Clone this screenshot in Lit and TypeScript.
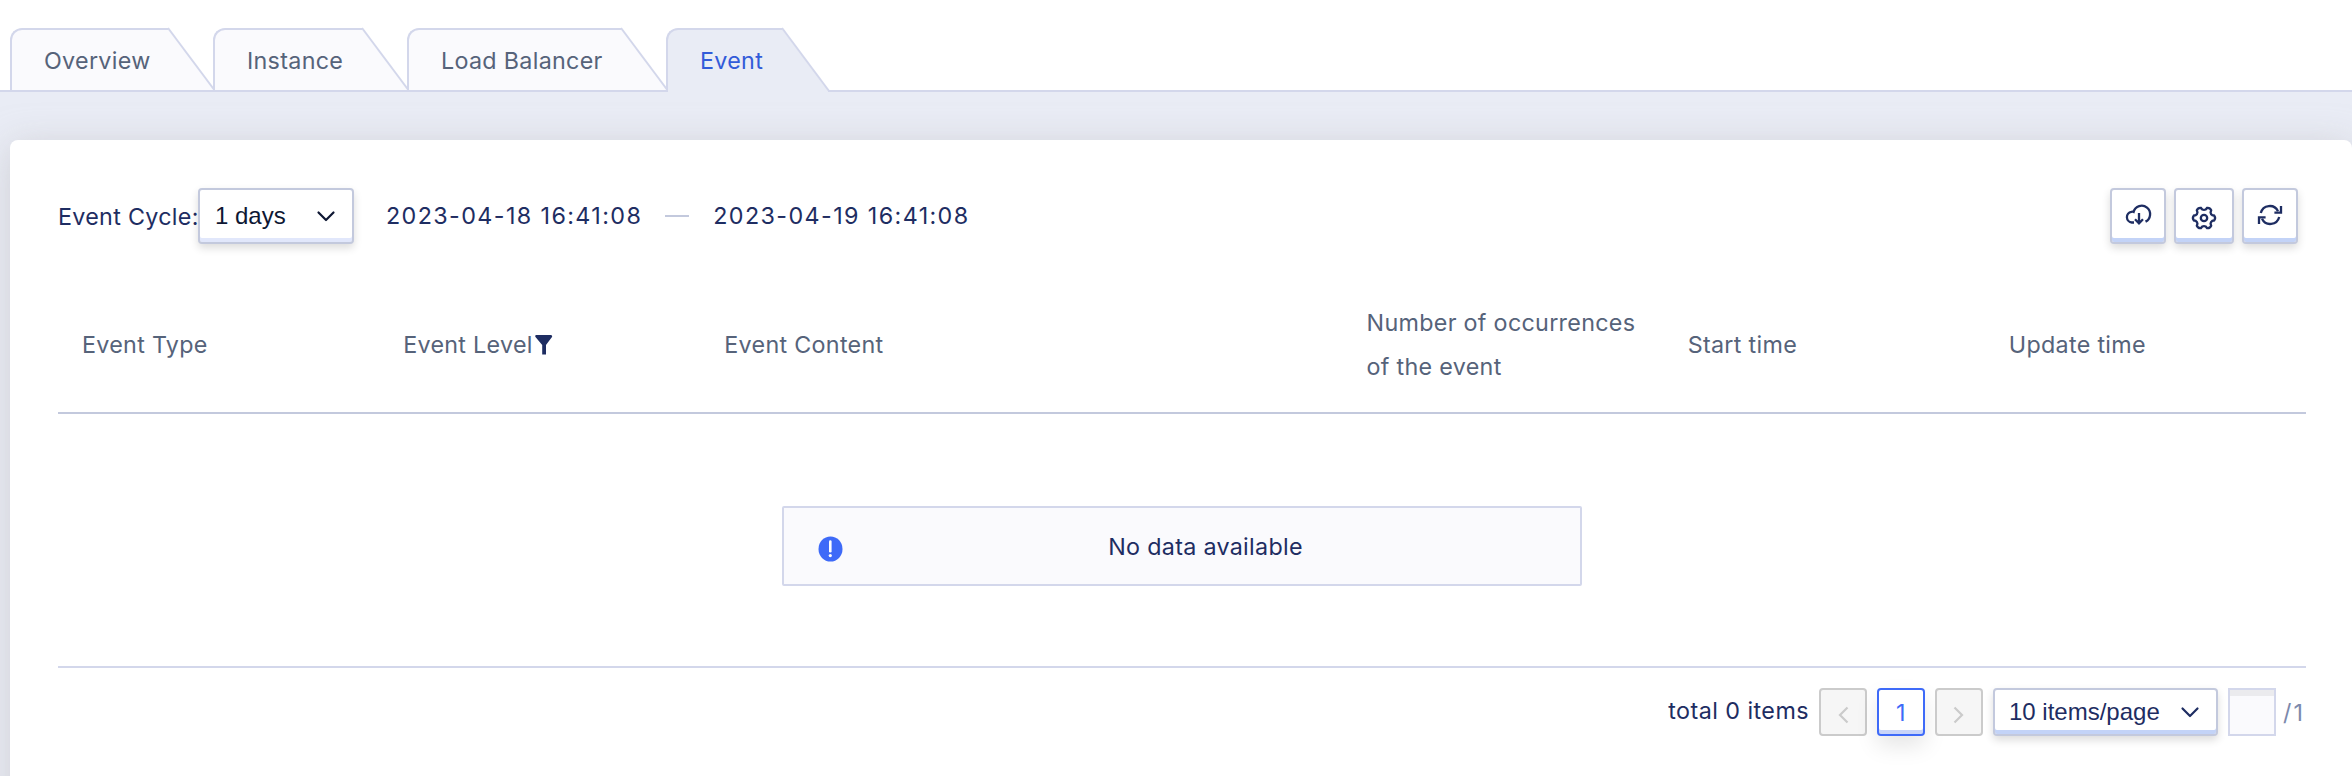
import { LitElement, html, css, svg } from "lit";
import { customElement } from "lit/decorators.js";
import { classMap } from "lit/directives/class-map.js";
import { styleMap } from "lit/directives/style-map.js";

const tabs = [
  { label: "Overview", width: 158 },
  { label: "Instance", width: 149 },
  { label: "Load Balancer", width: 214 },
  { label: "Event", width: 116, active: true },
];

const chevron = html`<svg class="chevron" width="20" height="14" viewBox="0 0 20 14">
  <path d="M2.5 3.5 L10 11 L17.5 3.5" fill="none" stroke="currentColor" stroke-width="2.2" stroke-linecap="round" stroke-linejoin="round" />
</svg>`;

/* Six-lobed gear outline, sampled around its centre. */
const gearPath = (() => {
  const pts: string[] = [];
  for (let i = 0; i < 6; i++) {
    const at = (deg: number, r: number) => {
      const a = ((i * 60 + deg) * Math.PI) / 180;
      return `${(12 + r * Math.cos(a)).toFixed(2)} ${(12 + r * Math.sin(a)).toFixed(2)}`;
    };
    pts.push(`${i ? "L" : "M"}${at(-13, 10.5)}`, `Q${at(0, 12)} ${at(13, 10.5)}`, `L${at(19, 8.7)}`, `Q${at(30, 7.8)} ${at(41, 8.7)}`);
  }
  return pts.join(" ") + "Z";
})();

@customElement("app-root")
export class AppRoot extends LitElement {
  static styles = css`
    :host {
      display: flex;
      flex-direction: column;
      height: 776px;
      overflow: hidden;
      background: #fff;
      font-family: Inter, "Liberation Sans", sans-serif;
      font-size: 23.3px;
      letter-spacing: 0.3px;
      color: #1e2d62;
      box-sizing: border-box;
    }
    *, *::before { box-sizing: border-box; }
    svg { display: block; flex: none; }
    .tabs { display: flex; height: 92px; padding: 28px 0 0 10px; flex: none;
      background: linear-gradient(#d3d7eb, #d3d7eb) 0 90px / 100% 2px no-repeat; }
    .tab { display: flex; height: 62px; margin-right: -1px; color: #56637a; }
    .tab-body { height: 62px; padding-left: 32px; line-height: 62px; white-space: nowrap;
      background: #fafafd; border: 2px solid #d3d7eb; border-right: 0; border-bottom: 0; border-radius: 12px 0 0 0; }
    .slant { overflow: visible; }
    .slant .fill { fill: #fafafd; }
    .slant .edge { stroke: #d3d7eb; stroke-width: 2; fill: none; }
    .active { color: #325bd9; }
    .active .tab-body { height: 64px; background: #e9ecf5; }
    .active .slant .fill { fill: #e9ecf5; }
    .content { flex: 1; background: #e9ecf5; padding: 48px 0 0 10px; overflow: hidden; }
    .card { height: 720px; background: #fff; border-radius: 8px; padding: 48px 46px 0 48px;
      box-shadow: 0 6px 36px rgba(190, 188, 192, 0.6); }
    .toolbar { display: flex; align-items: center; height: 56px; }
    .cycle-label { width: 140px; white-space: nowrap; padding-top: 1px; }
    .select { display: flex; align-items: center; justify-content: space-between; flex: none;
      font-family: "Liberation Sans", Arial, sans-serif; font-size: 24px; letter-spacing: 0;
      border: 2px solid #c3c9dd; border-radius: 4px; background: #fff;
      box-shadow: inset 0 -4px 0 #e1e7fb, 0 4px 8px rgba(0, 0, 0, 0.14); }
    .cycle { width: 156px; height: 56px; padding: 0 16px 0 15px; color: #0e1733; }
    .dates { display: flex; align-items: center; margin-left: 32px; letter-spacing: 1.4px; white-space: nowrap; }
    .dates span { padding-bottom: 1px; }
    .dash { width: 24px; height: 2px; margin: 0 24px 0 23px; background: #c3c9dd; }
    .actions { display: flex; gap: 8px; margin: 0 8px 0 auto; }
    .action { display: flex; align-items: center; justify-content: center; width: 56px; height: 56px; padding: 0 1px 2px 0;
      border: 2px solid #c3c9dd; border-radius: 4px; background: #fff;
      box-shadow: inset 0 -4px 0 #c3d3f7, 0 4px 8px rgba(0, 0, 0, 0.14); }
    .wide { width: 60px; padding: 4px 0 0; }
    .icon { fill: none; stroke: #1e2d62; stroke-width: 2.3; overflow: visible; }
    .head { display: grid; grid-template-columns: 1fr 1fr 2fr 1fr 1fr 1fr; align-items: center;
      height: 138px; margin-top: 32px; padding-top: 1px; border-bottom: 2px solid #c3c9dd; color: #56637a; line-height: 44px; }
    .th { display: flex; align-items: center; padding: 0 24px; }
    .funnel { margin-left: 2px; }
    .empty-row { display: flex; justify-content: center; align-items: flex-start; height: 254px; padding-top: 92px;
      border-bottom: 2px solid #d3d7eb; }
    .empty { display: flex; align-items: center; width: 800px; height: 80px; padding: 0 12px 0 34px;
      border: 2px solid #d3d7eb; border-radius: 2px; background: #fafafd; }
    .notice { margin-top: 5px; }
    .message { flex: 1; text-align: center; }
    .pager { display: flex; align-items: center; height: 48px; margin-top: 20px; }
    .total { margin-left: auto; margin-right: 10px; padding-bottom: 3px; letter-spacing: 0.45px; }
    .page { display: flex; align-items: center; justify-content: center; width: 48px; height: 48px; margin-right: 10px;
      border: 2px solid #cbcbcb; border-radius: 4px; background: #f6f6f6; color: #cbcbcb; padding-top: 5px; }
    .current { border-color: #3e6af8; background: #fff; color: #3e6af8; padding: 1px 0 0;
      box-shadow: inset 0 -4px 0 #c8d4f8, 0 10px 22px rgba(0, 0, 0, 0.1); }
    .size { width: 225px; height: 48px; padding: 0 16px 0 14px; margin-right: 10px;
      box-shadow: inset 0 -4px 0 #c3d3f7, 0 4px 8px rgba(0, 0, 0, 0.14); }
    .jump { width: 48px; height: 48px; border: 2px solid #d3d7eb; background: #fafafd; box-shadow: inset 0 6px 0 #ebebee; }
    .pages { margin: 0 3px 0 7px; color: #7c89ac; width: 20px; white-space: nowrap; letter-spacing: 2px; }
  `;

  render() {
    return html`
      <nav class="tabs">
        ${tabs.map(
          (t) => html`<div class=${classMap({ tab: true, active: !!t.active })}>
            <div class="tab-body" style=${styleMap({ width: `${t.width}px` })}><span class="label">${t.label}</span></div>
            <svg class="slant" width="46" height="62" viewBox="0 0 46 62">
              ${svg`<path class="fill" d=${t.active ? "M0 1 L46 62 V64 H0Z" : "M0 1 L46 62 H0Z"} />
              <path class="edge" d=${t.active ? "M0 0 L47 63" : "M0 0 L46 61.5"} />`}
            </svg>
          </div>`
        )}
      </nav>
      <main class="content">
        <section class="card">
          <div class="toolbar">
            <span class="cycle-label">Event Cycle:</span>
            <div class="select cycle"><span>1 days</span>${chevron}</div>
            <div class="dates"><span>2023-04-18 16:41:08</span><i class="dash"></i><span>2023-04-19 16:41:08</span></div>
            <div class="actions">
              <div class="action">
                <svg class="icon" width="26" height="22" viewBox="0 0 26 22">
                  <path d="M9 18.5 H6.8 A5.4 5.4 0 0 1 6.4 7.8 Q7.5 7.5 8.6 7.9 A8.4 8.4 0 1 1 20.5 17.6" />
                  <path d="M14 9 V19 M10 15.3 L14 19.3 L18 15.3" />
                </svg>
              </div>
              <div class="action wide">
                <svg class="icon" width="24" height="24" viewBox="0 0 24 24"><path d=${gearPath} /><circle cx="12" cy="12" r="3.2" /></svg>
              </div>
              <div class="action">
                <svg class="icon" width="26" height="22" viewBox="0 0 26 22">
                  <path d="M3.8 9 A9.2 9.2 0 0 1 21 7.2 M22.2 13 A9.2 9.2 0 0 1 5 14.8" />
                  <path d="M24 2 V8.6 H17.4 M2 20 V13.4 H8.6" />
                </svg>
              </div>
            </div>
          </div>
          <div class="head">
            <div class="th">Event Type</div>
            <div class="th">Event Level<svg class="funnel" width="18" height="20" viewBox="0 0 18 20"><path d="M1 0 H16 Q18 0.6 16.6 2.6 L11 10 V19.5 H7.2 V10 L0.9 2.6 Q-0.6 0.6 1 0Z" fill="#1e2d62" /></svg></div>
            <div class="th">Event Content</div>
            <div class="th">Number of occurrences<br />of the event</div>
            <div class="th">Start time</div>
            <div class="th">Update time</div>
          </div>
          <div class="empty-row">
            <div class="empty">
              <svg class="notice" width="25" height="26" viewBox="0 0 25 26"><ellipse cx="12.5" cy="13" rx="12" ry="12.6" fill="#3e6af8" /><path d="M12.3 5.6 V15.2" stroke="#fff" stroke-width="2.6" stroke-linecap="round" /><circle cx="12.3" cy="19.6" r="1.6" fill="#fff" /></svg>
              <span class="message">No data available</span>
            </div>
          </div>
          <div class="pager">
            <span class="total">total 0 items</span>
            <div class="page"><svg width="12" height="18" viewBox="0 0 12 18"><path d="M10.5 1.5 L3 9 L10.5 16.5" fill="none" stroke="currentColor" stroke-width="2.2" /></svg></div>
            <div class="page current">1</div>
            <div class="page"><svg width="12" height="18" viewBox="0 0 12 18"><path d="M1.5 1.5 L9 9 L1.5 16.5" fill="none" stroke="currentColor" stroke-width="2.2" /></svg></div>
            <div class="select size"><span>10 items/page</span>${chevron}</div>
            <div class="jump"></div>
            <span class="pages">/1</span>
          </div>
        </section>
      </main>
    `;
  }
}
